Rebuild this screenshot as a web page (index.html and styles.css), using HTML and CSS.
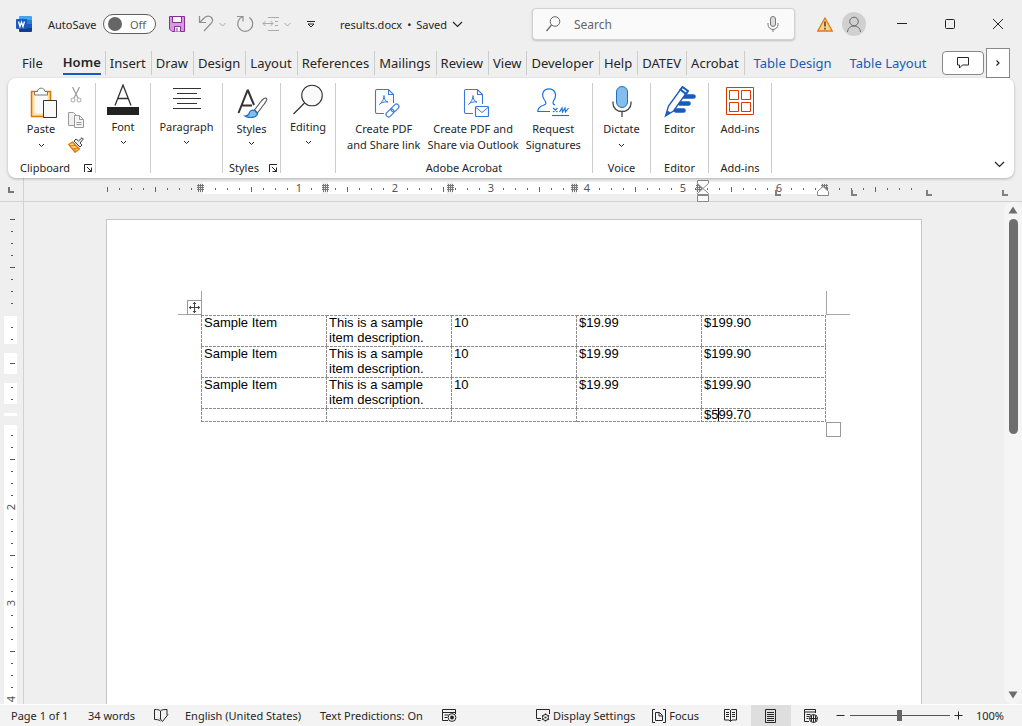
FILE: index.html
```html
<!DOCTYPE html>
<html lang="en">
<head>
<meta charset="utf-8">
<meta name="viewport" content="width=device-width, initial-scale=1">
<title>results.docx - Word</title>
<link rel="stylesheet" href="styles.css">
</head>
<body>
<header class="titlebar">
  <svg class="word-logo" width="16" height="16" viewBox="0 0 16 16"><path d="M4 0h11a1 1 0 0 1 1 1v3H3V1a1 1 0 0 1 1-1z" fill="#41a5ee"/><path d="M3 4h13v4H3z" fill="#2b7cd3"/><path d="M3 8h13v4H3z" fill="#185abd"/><path d="M3 12h13v3a1 1 0 0 1-1 1H4a1 1 0 0 1-1-1z" fill="#103f91"/><path d="M3 4h8v10H3z" fill="#0b3377" opacity=".5"/><rect y="3" width="11" height="10" rx="1" fill="#185abd"/><path d="M2.500 5.500 4 10.500 5.500 6 7 10.500 8.500 5.500" fill="none" stroke="#fff" stroke-width="1.300"/></svg>
  <label class="autosave">AutoSave
    <span class="toggle"><input type="checkbox"><span>Off</span></span>
  </label>
  <div class="quick">
    <button aria-label="Save"><svg width="16" height="16" viewBox="0 0 16 16"><path d="M.5.500h15v15H3L.5 13z" fill="#d59add" stroke="#8a2d9b"/><path d="M3.500.500h9v6h-9zM5.500 15.500v-5h6v5" fill="#fafafa" stroke="#8a2d9b"/><path d="M8 12v3.500" stroke="#8a2d9b" fill="none"/></svg></button>
    <button class="undo" aria-label="Undo"><svg width="16" height="18" viewBox="0 0 16 18"><path d="M1.500 1v6.500H8M1.500 7.500 7 2.300c5-3.500 10 2 6 6.200L6 16" fill="none" stroke="#8f8f8f" stroke-width="1.200"/></svg></button>
    <button class="undo-more" aria-label="Undo list"><svg width="7" height="5" viewBox="0 0 7 5"><path d="m.5 1 3 3 3-3" fill="none" stroke="#aaa"/></svg></button>
    <button class="redo" aria-label="Repeat"><svg width="18" height="18" viewBox="0 0 18 18"><path d="M1 1.500h6v5M6.800 1.700a7.500 7.500 0 1 0 6.500.8" fill="none" stroke="#8f8f8f" stroke-width="1.200"/></svg></button>
    <button class="spacing" aria-label="Spacing"><svg width="18" height="14" viewBox="0 0 18 14"><path d="M6 .5h11M13 4.500h3M13 8.500h3M6 13.500h11M1 6.500h10M3.500 4 1 6.500 3.500 9M8.500 4 11 6.500 8.500 9" fill="none" stroke="#aaa"/></svg></button>
    <button class="spacing-more" aria-label="Spacing options"><svg width="7" height="5" viewBox="0 0 7 5"><path d="m.5 1 3 3 3-3" fill="none" stroke="#aaa"/></svg></button>
    <button class="customize" aria-label="Customize toolbar"><svg width="8" height="7" viewBox="0 0 8 7"><path d="M0 .5h8M1 3l3 3 3-3z" fill="none" stroke="#262626"/></svg></button>
  </div>
  <button class="doc-name">results.docx <b>•</b> Saved <svg width="11" height="7" viewBox="0 0 11 7"><path d="m1 1 4.500 4.500L10 1" fill="none" stroke="#262626" stroke-width="1.200"/></svg></button>
  <label class="search">
    <svg width="15" height="16" viewBox="0 0 15 16"><circle cx="9" cy="5.500" r="4.800" fill="none" stroke="#666"/><path d="M5.500 9 .5 15" stroke="#666" stroke-width="1.200"/></svg>
    <input type="search" placeholder="Search" aria-label="Search">
    <svg width="12" height="16" viewBox="0 0 12 16"><rect x="3.500" y=".5" width="5" height="10" rx="2.500" fill="#ddd" stroke="#777"/><path d="M1 7v1.500a5 5 0 0 0 10 0V7M6 13.500V16" fill="none" stroke="#777"/></svg>
  </label>
  <button class="warning" aria-label="Warning"><svg width="16" height="15" viewBox="0 0 16 15"><path d="M8 1 15.200 14H.8z" fill="#fbd48b" stroke="#e07a1a" stroke-width="1.300"/><path d="M8 4.500v5M8 10.800v1.700" stroke="#333" stroke-width="1.400"/></svg></button>
  <button class="avatar" aria-label="Account"><svg width="24" height="24" viewBox="0 0 24 24"><circle cx="12" cy="12" r="12" fill="#d0d0d0"/><circle cx="12" cy="9.500" r="4.300" fill="none" stroke="#666"/><path d="M5.500 20c.4-8 12.600-8 13 0" fill="none" stroke="#666"/></svg></button>
  <div class="window-buttons">
    <button aria-label="Minimize"><svg width="10" height="10" viewBox="0 0 10 10"><path d="M0 4.500h10" stroke="#222"/></svg></button>
    <button aria-label="Maximize"><svg width="10" height="10" viewBox="0 0 10 10"><rect x=".5" y=".5" width="9" height="9" rx="1" fill="none" stroke="#222"/></svg></button>
    <button aria-label="Close"><svg width="10" height="10" viewBox="0 0 10 10"><path d="m0 0 10 10M10 0 0 10" stroke="#222"/></svg></button>
  </div>
</header>

<nav class="tabs">
  <button class="file">File</button>
  <button class="home"><span>Home</span></button>
  <button>Insert</button><button>Draw</button><button>Design</button><button>Layout</button><button>References</button><button>Mailings</button><button>Review</button><button>View</button><button>Developer</button><button>Help</button><button>DATEV</button><button>Acrobat</button>
  <button class="context">Table Design</button><button class="context">Table Layout</button>
  <button class="comments" aria-label="Comments"><svg width="12" height="12" viewBox="0 0 12 12"><path d="M.5.500h11v7.500H5.500L2.500 11V8h-2z" fill="none" stroke="#262626"/></svg></button>
  <button class="more-tabs" aria-label="More tabs"><svg width="4" height="6" viewBox="0 0 4 6"><path d="m.5.500 2.500 2.500-2.500 2.500" fill="none" stroke="#222" stroke-width="1.200"/></svg></button>
</nav>

<section class="ribbon">
  <div class="group g-clip">
    <div class="items">
      <button class="tool">
        <svg width="32" height="34" viewBox="0 0 32 34"><path d="M6.500 5.500h19v25h-19z" fill="#fbe0a0" stroke="#e07400" stroke-width="1.500"/><path d="M9.500 8.500h13v19h-13z" fill="#fafafa"/><path d="M9.500 9V5.500h3c.3-4.500 7-4.500 7.400 0h2.600V9z" fill="#fafafa" stroke="#777"/><path d="M18.500 14.500h13v17h-13z" fill="#fafafa" stroke="#333"/></svg>
        <span>Paste</span><svg class="down" width="7" height="5" viewBox="0 0 7 5"><path d="M1 1l2.500 2.500L6 1" fill="none" stroke="#222"/></svg>
      </button>
      <div class="small-tools">
        <button aria-label="Cut"><svg width="16" height="16" viewBox="0 0 16 16"><path d="m4.500 0 5.500 11M11.500 0 6 11" stroke="#9a9a9a" fill="none" stroke-width="1.200"/><circle cx="5" cy="13" r="2" fill="none" stroke="#aaa"/><circle cx="11" cy="13" r="2" fill="none" stroke="#aaa"/></svg></button>
        <button aria-label="Copy"><svg width="16" height="16" viewBox="0 0 16 16"><path d="M.5.500h5l3 3v10h-8z" fill="#f0f0f0" stroke="#999"/><path d="M6.500 3.500h5l4 4v8h-9z" fill="#f4f4f4" stroke="#999"/><path d="M11.500 3.500v4h4M8.500 10.500h5M8.500 12.500h5" fill="none" stroke="#999"/></svg></button>
        <button aria-label="Format painter"><svg width="16" height="16" viewBox="0 0 16 16"><path d="m4.500 5 7 7L7 15.300.8 7.500z" fill="#fbd08a" stroke="#e07400" stroke-width="1.200"/><path d="m2 9 5.500-.5M4 12l6-1M7 15v-3" stroke="#e07400"/><path d="m6 4 2-2 2.500 2L14 .7 15.300 2 12 6l2 2-2 2z" fill="#f0f0f0" stroke="#444"/></svg></button>
      </div>
    </div>
    <div class="caption">Clipboard<button class="launcher" aria-label="Clipboard settings"><svg width="8" height="8" viewBox="0 0 8 8"><path d="M.5 8V.5H8M3 3l4.500 4.500M7.500 3.500v4h-4" fill="none" stroke="#262626"/></svg></button></div>
  </div>
  <div class="group g-font">
    <div class="items"><button class="tool high">
      <svg width="32" height="32" viewBox="0 0 32 32"><path d="M8 21.500 16 1l8 20.500M11 14.500h10" fill="none" stroke="#333" stroke-width="1.300"/><path d="M0 23h32v8H0z" fill="#222"/></svg>
      <span>Font</span><svg class="down" width="7" height="5" viewBox="0 0 7 5"><path d="M1 1l2.500 2.500L6 1" fill="none" stroke="#222"/></svg></button></div>
  </div>
  <div class="group g-para">
    <div class="items"><button class="tool high">
      <svg width="32" height="32" viewBox="0 0 32 32"><path d="M2 4.500h28M6 9.500h20M2 14.500h28M6 19.500h20M2 24.500h28" stroke="#333"/></svg>
      <span>Paragraph</span><svg class="down" width="7" height="5" viewBox="0 0 7 5"><path d="M1 1l2.500 2.500L6 1" fill="none" stroke="#222"/></svg></button></div>
  </div>
  <div class="group g-styles">
    <div class="items"><button class="tool mid">
      <svg width="32" height="32" viewBox="0 0 32 32"><path d="M2.500 27 11.500 4.500h.5L18 19M5.500 19.500H16" fill="none" stroke="#333" stroke-width="2"/><path d="M30.500 12.500c-1.500-1.500-4 1-6 3.500l-6 8 3 3 6-8c2-2.500 4-5.500 3-6.500z" fill="#fff" stroke="#555" stroke-width="1.100"/><path d="M18.500 24.500c-3-1-5 1-5.500 3-.5 1.500-2 2.500-4 2.500 4 2.500 12 2 12.500-2.500z" fill="#83beec" stroke="#1e6fbe" stroke-width="1.200"/></svg>
      <span>Styles</span><svg class="down" width="7" height="5" viewBox="0 0 7 5"><path d="M1 1l2.500 2.500L6 1" fill="none" stroke="#222"/></svg></button></div>
    <div class="caption">Styles<button class="launcher" aria-label="Styles settings"><svg width="8" height="8" viewBox="0 0 8 8"><path d="M.5 8V.5H8M3 3l4.500 4.500M7.500 3.500v4h-4" fill="none" stroke="#262626"/></svg></button></div>
  </div>
  <div class="group g-edit">
    <div class="items"><button class="tool high">
      <svg width="32" height="32" viewBox="0 0 32 32"><circle cx="20" cy="11.500" r="10.300" fill="#fafafa" stroke="#333" stroke-width="1.100"/><path d="M12.500 19 1.500 30" stroke="#333" stroke-width="1.200"/></svg>
      <span>Editing</span><svg class="down" width="7" height="5" viewBox="0 0 7 5"><path d="M1 1l2.500 2.500L6 1" fill="none" stroke="#222"/></svg></button></div>
  </div>
  <div class="group g-pdf">
    <div class="items">
      <button class="tool mid"><svg width="32" height="32" viewBox="0 0 32 32"><path d="M16 27.500H9a1.500 1.500 0 0 1-1.500-1.500V5A1.500 1.500 0 0 1 9 3.500h11.500l5 5V17M20.500 3.500v5h5" fill="none" stroke="#3b78dc" stroke-width="1.100"/><path d="M11.500 18.500c1.500-2 4.500-3 8.500-2.500M16 9.500c0 3.500 1.500 6 4 6.500M16 9.500c0 3.500-1.500 6-4.500 9" fill="none" stroke="#3b78dc"/><g fill="none" stroke="#3b78dc" stroke-width="1.200"><rect x="17.500" y="24.500" width="9" height="5" rx="2.500" transform="rotate(-45 22 27)"/><rect x="22.500" y="19.500" width="9" height="5" rx="2.500" transform="rotate(-45 27 22)"/></g></svg><span>Create PDF<br>and Share link</span></button>
      <button class="tool mid"><svg width="32" height="32" viewBox="0 0 32 32"><path d="M16 27.500H9a1.500 1.500 0 0 1-1.500-1.500V5A1.500 1.500 0 0 1 9 3.500h11.500l5 5V18M20.500 3.500v5h5" fill="none" stroke="#3b78dc" stroke-width="1.100"/><path d="M11.500 18.500c1.500-2 4.500-3 8.500-2.500M16 9.500c0 3.500 1.500 6 4 6.500M16 9.500c0 3.500-1.500 6-4.500 9" fill="none" stroke="#3b78dc"/><rect x="18.500" y="20.500" width="13" height="10" rx="1" fill="#fff" stroke="#3b78dc" stroke-width="1.200"/><path d="m19 21.500 6 5 6-5" fill="none" stroke="#3b78dc"/></svg><span>Create PDF and<br>Share via Outlook</span></button>
      <button class="tool mid"><svg width="32" height="32" viewBox="0 0 32 32"><path d="M13 25.500H.8c0-4 3-5.500 6.200-6.500 3-1 2-3 .5-5C3.500 8 6.500 2.800 12 2.800S20.500 8 17 14c-1.500 2.500-1.500 4 1 5" fill="none" stroke="#1473e6" stroke-width="1.200"/><path d="m16 22 4.500 4M20.500 22 16 26M22.500 26l2.500-4 .5 4 2.500-4 .5 4 3-4" fill="none" stroke="#1473e6" stroke-width="1.200"/><path d="M15 29.500h17" stroke="#1473e6" stroke-width="1.100"/></svg><span>Request<br>Signatures</span></button>
    </div>
    <div class="caption">Adobe Acrobat</div>
  </div>
  <div class="group g-voice">
    <div class="items"><button class="tool">
      <svg width="32" height="34" viewBox="0 0 32 34"><rect x="10.500" y="0.500" width="11" height="21" rx="5.500" fill="#83beec" stroke="#1e6fbe"/><path d="M7 15.500v2a9 8 0 0 0 18 0v-2M16 25.500V31" fill="none" stroke="#444" stroke-width="1.300"/></svg>
      <span>Dictate</span><svg class="down" width="7" height="5" viewBox="0 0 7 5"><path d="M1 1l2.500 2.500L6 1" fill="none" stroke="#222"/></svg></button></div>
    <div class="caption">Voice</div>
  </div>
  <div class="group g-voice">
    <div class="items"><button class="tool mid">
      <svg width="32" height="32" viewBox="0 0 32 32"><path d="M18 10.500h11.500M16 17.500h8.500M12 24.500h7.500" stroke="#185abd" stroke-width="4.600" stroke-linecap="round"/><path d="M1.500 30 4.500 20 16.500 3.500 22 7.500 9.500 25z" fill="#fafafa" stroke="#185abd" stroke-width="1.300"/><path d="M16.500 3.500 18.500 1l5.500 4-2 3z" fill="#fff" stroke="#185abd" stroke-width="2"/><path d="m1.500 30 2-5.500 3 2z" fill="#185abd"/></svg>
      <span>Editor</span></button></div>
    <div class="caption">Editor</div>
  </div>
  <div class="group g-add">
    <div class="items"><button class="tool mid">
      <svg width="32" height="32" viewBox="0 0 32 32"><path d="M2.500 1.500h27v27h-27zM5.500 4.500h9v9h-9zM17.500 4.500h9v9h-9zM5.500 16.500h9v9h-9zM17.500 16.500h9v9h-9z" fill="none" stroke="#d83b01"/></svg>
      <span>Add-ins</span></button></div>
    <div class="caption">Add-ins</div>
  </div>
  <button class="collapse" aria-label="Collapse ribbon"><svg width="11" height="7" viewBox="0 0 11 7"><path d="m1 1 4.500 4.500L10 1" fill="none" stroke="#222" stroke-width="1.200"/></svg></button>
</section>

<main class="workspace">
  <div class="corner"><svg width="6" height="6" viewBox="0 0 6 6"><path d="M1 0v5h5" fill="none" stroke="#777" stroke-width="2"/></svg></div>
  <div class="hruler">
    <svg width="980" height="23" viewBox="24 178 980 23">
      <path d="M203 182h622v12H203z" fill="#fff"/>
      <g id="hticks" stroke="#666"></g>
      <g class="ruler-text"><text x="299" y="192">1</text><text x="395" y="192">2</text><text x="491" y="192">3</text><text x="587" y="192">4</text><text x="683" y="192">5</text><text x="779" y="192">6</text></g>
      <g id="columns"></g>
      <path d="M776 190v5h5M852 190v5h5M927 190v5h5M1003 190v5h5" fill="none" stroke="#808080" stroke-width="2"/>
      <path d="M697.500 180.500h11v3l-5.500 5 5.500 5v1h-11v-1l5.500-5-5.500-5zM697.500 195.500h11v6h-11z" fill="#fafafa" stroke="#888"/>
      <path d="M817.500 195.500h11v-4l-5.500-5-5.500 5z" fill="#fff" stroke="#888"/>
    </svg>
  </div>
  <div class="vruler">
    <svg width="23" height="503" viewBox="0 202 23 503">
      <path d="M4 316h13v28H4zM4 353h13v21H4zM4 383h13v21H4zM4 413h13v3H4zM4 425h13v280H4z" fill="#fff"/>
      <g id="vticks" stroke="#555"></g>
      <g class="ruler-text"><text transform="translate(15 507) rotate(-90)">2</text><text transform="translate(15 603) rotate(-90)">3</text><text transform="translate(15 699) rotate(-90)">4</text></g>
    </svg>
  </div>
  <div class="canvas">
    <article class="page">
      <div class="table-wrap">
        <table>
          <tbody>
            <tr><td>Sample Item</td><td>This is a sample item description.</td><td>10</td><td>$19.99</td><td>$199.90</td></tr>
            <tr><td>Sample Item</td><td>This is a sample item description.</td><td>10</td><td>$19.99</td><td>$199.90</td></tr>
            <tr><td>Sample Item</td><td>This is a sample item description.</td><td>10</td><td>$19.99</td><td>$199.90</td></tr>
            <tr class="total"><td></td><td></td><td></td><td></td><td>$5<span class="caret"></span>99.70</td></tr>
          </tbody>
        </table>
        <i class="crop left"></i><i class="crop right"></i>
        <button class="move" aria-label="Move table"><svg width="13" height="13" viewBox="0 0 13 13"><path d="M6.500 1v11M1 6.500h11M5 3l1.500-1.700L8 3M5 10l1.500 1.700L8 10M3 5 1.300 6.500 3 8M10 5l1.700 1.500L10 8" fill="none" stroke="#444"/></svg></button>
        <button class="resize" aria-label="Resize table"></button>
      </div>
    </article>
  </div>
  <div class="scrollbar">
    <button aria-label="Scroll up"><svg width="10" height="8" viewBox="0 0 10 8"><path d="M5 .5 9.500 7.500H.5z" fill="#6e6e6e"/></svg></button>
    <div class="thumb"></div>
    <button class="scroll-down" aria-label="Scroll down"><svg width="10" height="8" viewBox="0 0 10 8"><path d="M5 7.500.5.500h9z" fill="#6e6e6e"/></svg></button>
  </div>
</main>

<footer class="status">
  <button class="s-page">Page 1 of 1</button>
  <button class="s-words">34 words</button>
  <button class="s-proof" aria-label="Proofing"><svg width="15" height="13" viewBox="0 0 15 13"><path d="M6.500 12C5 10.500 2 10.500.5 10.500V.5C3 .5 5 .5 6.500 2 8 .5 10 .5 13 .5V6M6.500 2v8M6 9.500l2.500 3 5.500-7" fill="none" stroke="#262626"/></svg></button>
  <button class="s-lang">English (United States)</button>
  <button class="s-pred">Text Predictions: On</button>
  <button aria-label="Macro recording"><svg width="15" height="13" viewBox="0 0 15 13"><path d="M6 11.500H.5V.5h13V5M.5 3.500h13M2.500 6h4M2.500 8.500h3" fill="none" stroke="#262626"/><circle cx="10" cy="8.500" r="3.900" fill="#f3f3f3" stroke="#262626"/><circle cx="10" cy="8.500" r="1.900" fill="#262626"/></svg></button>
  <button class="s-display"><svg width="15" height="13" viewBox="0 0 15 13"><path d="M5 9.500H.5V.500h13V5M1.500 11.500h3" fill="none" stroke="#262626"/><circle cx="9.500" cy="8.500" r="3" fill="#f3f3f3" stroke="#262626"/><path d="M9.500 4.500V6M9.500 11v1.500M6 6.500l1.300.8M11.700 9.700l1.300.8M6 10.500l1.300-.8M11.700 7.300l1.300-.8M8.500 8.500h2" stroke="#262626" stroke-width="1.300"/></svg>Display Settings</button>
  <button class="s-focus"><svg width="14" height="14" viewBox="0 0 14 14"><path d="M3 .5H.5v13H3M11 .5h2.500v13H11M3.500 3.500h4l3 3v5h-7zM7 3.500V7h3.500" fill="none" stroke="#262626"/></svg>Focus</button>
  <button class="view" aria-label="Read mode"><svg width="13" height="13" viewBox="0 0 13 13"><path d="M.5.500h5l1 1 1-1h5v10.500H8L6.500 12.500 5 11H.5zM6.500 1.500V12M2 3.500h3M2 5.500h3M2 7.500h3M8 3.500h3M8 5.500h3M8 7.500h3" fill="none" stroke="#262626"/></svg></button>
  <button class="view active" aria-label="Print layout"><svg width="11" height="14" viewBox="0 0 11 14"><path d="M.5.500h10v13H.5zM2 3.500h7M2 5.500h7M2 7.500h7M2 9.500h7M2 11.500h7" fill="none" stroke="#262626"/></svg></button>
  <button class="view" aria-label="Web layout"><svg width="14" height="14" viewBox="0 0 14 14"><path d="M5 12.500H.5V.5h11V4M.5 3h11M2.500 5.500h4M2.500 7.500h3M2.500 9.500h2" fill="none" stroke="#262626"/><circle cx="9.500" cy="9.500" r="4" fill="#f3f3f3" stroke="#262626"/><path d="M5.500 9.500h8M9.500 5.500v8M7.500 6.500v6M11.500 6.500v6" stroke="#262626"/></svg></button>
  <button class="zoom-btn" aria-label="Zoom out"><svg width="9" height="9" viewBox="0 0 9 9"><path d="M.5 4.500h8" stroke="#262626"/></svg></button>
  <input class="zoom" type="range" min="0" max="100" value="50" aria-label="Zoom">
  <button class="zoom-btn in" aria-label="Zoom in"><svg width="9" height="9" viewBox="0 0 9 9"><path d="M.5 4.500h8M4.500.500v8" stroke="#262626"/></svg></button>
  <button class="percent">100%</button>
</footer>
<script src="rulers.js"></script>
</body>
</html>
```
FILE: rulers.js
```javascript
const INCH = 96;
const STEP = INCH / 8;

// Horizontal ruler: eighth-inch dots, half-inch marks, column grips.
let across = "";
for (let i = -8; i <= 59; i++) {
  const x = 203 + i * STEP + 0.5;
  const numbered = i % 8 === 0 && i > 0 && i < 56;
  if (numbered || i === 0 || x > 915) continue;
  across += i % 4 === 0 ? `M${x} 187v5` : `M${x} 188v2`;
}
document.getElementById("hticks").innerHTML = `<path d="${across}"/>`;

let grips = "";
for (const x of [197, 322, 447, 571, 696, 821]) {
  grips += `<path d="M${x} 182h6v12h-6z" fill="#efefef"/>` +
    `<path d="M${x + 1.5} 184v8M${x + 3.5} 184v8M${x + 5.5} 184v8M${x} 185.5h7M${x} 187.5h7M${x} 189.5h7" fill="none" stroke="#777"/>`;
}
document.getElementById("columns").innerHTML = grips;

// Vertical ruler: same spacing, hidden where table rows have their grips.
let down = "";
for (let i = -8; i < 33; i++) {
  const y = 315 + i * STEP + 0.5;
  if ([0, 3, 5, 8, 9, 16, 24, 32].includes(i)) continue;
  down += i % 4 === 0 ? `M10 ${y}h5` : `M11 ${y}h2`;
}
document.getElementById("vticks").innerHTML = `<path d="${down}"/>`;
```
FILE: styles.css
```css
* { box-sizing: border-box; }
body {
  margin: 0;
  height: 100vh;
  display: flex;
  flex-direction: column;
  overflow: hidden;
  background: #efefef;
  color: #262626;
  font-family: "Noto Sans", "Open Sans", sans-serif;
  font-size: 11px;
}
button {
  display: flex;
  align-items: center;
  flex: none;
  margin: 0;
  padding: 0;
  border: 0;
  background: none;
  color: inherit;
  font: inherit;
  white-space: nowrap;
}
svg { display: block; flex: none; }

/* Title bar */
.titlebar { display: flex; align-items: center; height: 48px; padding: 0 19px 0 16px; flex: none; }
.word-logo { margin-right: 16px; }
.autosave { display: flex; align-items: center; justify-content: space-between; width: 108px; }
.toggle { display: flex; align-items: center; gap: 8px; width: 53px; height: 20px; padding: 0 4px; border: 1px solid #5e5e5e; border-radius: 10px; background: #fff; color: #5e5e5e; }
.toggle input { appearance: none; margin: 0; width: 14px; height: 14px; border-radius: 50%; background: #666; }
.quick { display: flex; align-items: center; width: 171px; margin-left: 13px; }
.undo { margin-left: 13px; }
.undo-more { margin-left: 5px; }
.redo { margin-left: 10px; }
.spacing { margin-left: 8px; }
.spacing-more { margin-left: 4px; }
.customize { margin-left: 16px; }
.doc-name { width: 180px; gap: 5px; }
.doc-name b { font-weight: 400; }
.search { display: flex; align-items: center; flex: 1; min-width: 0; height: 32px; margin-left: 12px; padding: 0 15px 0 13px; border: 1px solid #d2d2d2; border-radius: 4px; background: #fafafa; box-shadow: 0 1px 2px #0003; }
.search input { flex: 1; min-width: 0; margin: 0 0 0 13px; padding: 0; border: 0; outline: 0; background: none; font: inherit; font-size: 12px; }
.search input::placeholder { color: #666; opacity: 1; }
.warning { margin-left: 22px; }
.avatar { margin-left: 9px; }
.window-buttons { display: flex; gap: 38px; margin-left: 31px; }

/* Ribbon tabs */
.tabs { display: flex; align-items: center; height: 30px; padding: 0 12px 0 22px; flex: none; font-size: 13px; }
.tabs button { height: 24px; padding: 0 5px 0 4px; border-right: 1px solid #ccc; }
.tabs .file { padding: 0 20px 0 0; border: 0; }
.tabs .home { padding: 0 4px 0 0; font-weight: 600; }
.home span { border-bottom: 2px solid #185abd; line-height: 22px; }
.tabs .context { border: 0; padding: 0 9px; color: #185abd; }
.tabs .comments { width: 42px; margin-left: auto; padding: 0; justify-content: center; border: 1px solid #888; border-radius: 4px; background: #fff; }
.tabs .more-tabs { width: 24px; height: 30px; margin-left: 2px; padding: 0; justify-content: center; border: 1px solid #888; background: #fff; }

/* Ribbon */
.ribbon { display: flex; height: 100px; margin: 0 8px; padding: 5px 0; flex: none; border-radius: 8px; background: #fff; box-shadow: 0 1px 3px #0004; position: relative; z-index: 1; }
.group { display: flex; flex-direction: column; justify-content: space-between; flex: none; border-right: 1px solid #ccc; }
.g-clip { width: 88px; }
.g-font, .g-edit { width: 55px; }
.g-para { width: 72px; }
.g-styles, .g-voice { width: 58px; }
.g-pdf { width: 257px; }
.g-add { width: 63px; }
.items { display: flex; justify-content: center; gap: 7px; }
.g-clip .items { gap: 11px; padding-left: 6px; }
.tool { flex-direction: column; padding-top: 3px; line-height: 16px; }
.tool span { padding-top: 1px; }
.down { margin-top: 6px; }
.tool.high { padding-top: 1px; }
.tool.high span { padding-top: 3px; }
.tool.high .down { margin-top: 5px; }
.tool.mid span { padding-top: 3px; }
.tool.mid .down { margin-top: 4px; }
.small-tools { display: flex; flex-direction: column; gap: 9px; padding-top: 4px; }
.caption { display: flex; align-items: center; justify-content: center; line-height: 16px; margin-bottom: -3px; }
.g-clip .caption { justify-content: space-between; padding: 0 3px 0 12px; }
.g-styles .caption { justify-content: space-between; padding: 0 3px 0 6px; }
.collapse { margin: auto 9px 5px auto; }

/* Document area */
.workspace { display: grid; grid-template-columns: 24px 1fr 18px; grid-template-rows: 24px 1fr; flex: 1; min-height: 0; }
.corner { display: flex; align-items: center; padding: 0 0 0 8px; border-right: 1px solid #d2d2d2; border-bottom: 1px solid #d2d2d2; }
.hruler { display: flex; justify-content: center; grid-column: 2 / 4; padding-right: 18px; border-bottom: 1px solid #d2d2d2; }
.hruler svg { overflow: visible; }
.ruler-text { fill: #555; text-anchor: middle; }
.vruler { border-right: 1px solid #d2d2d2; overflow: hidden; }
.canvas { overflow: hidden; padding-top: 17px; }
.page { width: 816px; min-height: 1056px; margin: 0 auto; padding: 95px 95px 95px 94px; border: 1px solid #c6c6c6; background: #fff; color: #000; font-family: "Liberation Sans", Arial, sans-serif; font-size: 13px; line-height: 15px; }
.table-wrap { position: relative; }
table {
  width: 100%;
  table-layout: fixed;
  border-collapse: collapse;
  background:
    repeating-linear-gradient(#8c8c8c 0 3px, transparent 3px 4px) right / 1px 100% no-repeat,
    repeating-linear-gradient(90deg, #8c8c8c 0 3px, transparent 3px 4px) bottom / 100% 1px no-repeat;
}
td {
  height: 14px;
  padding: 0 20px 1px 3px;
  vertical-align: top;
  background:
    repeating-linear-gradient(#8c8c8c 0 3px, transparent 3px 4px) left / 1px 100% no-repeat,
    repeating-linear-gradient(90deg, #8c8c8c 0 3px, transparent 3px 4px) top / 100% 1px no-repeat;
}
.total td { padding-bottom: 0; line-height: 14px; }
.caret { display: inline-block; width: 1px; height: 13px; margin-right: -1px; vertical-align: top; background: #000; }
.crop { position: absolute; top: -24px; width: 24px; height: 24px; border-bottom: 1px solid #a6a6a6; }
.crop.left { left: -23px; border-right: 1px solid #a6a6a6; }
.crop.right { right: -24px; border-left: 1px solid #a6a6a6; }
.move { position: absolute; left: -14px; top: -15px; width: 15px; height: 15px; border: 1px solid #999; background: #fff; }
.resize { position: absolute; right: -15px; bottom: -15px; width: 15px; height: 15px; border: 1px solid #999; background: #fff; }
.scrollbar { display: flex; flex-direction: column; align-items: center; padding: 4px 0 5px; border-radius: 8px; background: #f5f5f5; }
.thumb { width: 9px; height: 215px; margin-top: 5px; border-radius: 5px; background: #6e6e6e; }
.scroll-down { margin-top: auto; }

/* Status bar */
.status { display: flex; align-items: center; height: 22px; padding: 0 18px 0 11px; flex: none; border-top: 1px solid #fff; background: #f3f3f3; }
.status button { height: 21px; }
.s-page { width: 77px; }
.s-words { width: 66px; }
.s-proof { width: 31px; }
.s-lang { width: 135px; }
.s-pred { width: 122px; }
.s-display { gap: 2px; margin-left: auto; }
.s-focus { gap: 3px; margin: 0 12px 0 17px; }
.view { width: 40px; justify-content: center; }
.view.active { background: #dedede; }
.zoom-btn { width: 9px; margin-left: 5px; }
.zoom-btn.in { margin-left: 4px; }
.zoom { appearance: none; width: 100px; height: 12px; margin: 0 0 0 5px; background: linear-gradient(#555, #555) center / 100% 1px no-repeat; }
.zoom::-webkit-slider-thumb { appearance: none; width: 5px; height: 11px; background: #666; }
.percent { margin-left: 13px; }
```
